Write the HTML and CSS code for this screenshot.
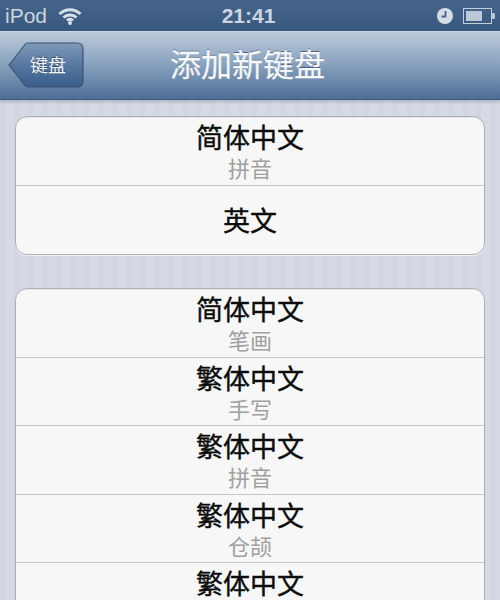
FILE: index.html
```html
<!DOCTYPE html>
<html lang="zh">
<head>
  <meta charset="UTF-8" />
  <title>添加新键盘</title>
  <link rel="stylesheet" href="styles.css">
</head>
<body>
  <div class="screen">
    <div class="status-bar">
      <div class="status-left">
        <span>iPod</span>
        <svg class="wifi" width="24" height="18" viewBox="0 0 24 18">
          <path d="M1.500 7 A15 15 0 0 1 22.500 7" />
          <path d="M5.500 10.500 A9.500 9.500 0 0 1 18.500 10.500" />
          <path d="M9 13.500 A4.500 4.500 0 0 1 15 13.500" />
          <circle cx="12" cy="16" r="2" />
        </svg>
      </div>
      <div class="status-time">21:41</div>
      <div class="status-right">
        <svg class="clock" width="16" height="16" viewBox="0 0 16 16">
          <circle cx="8" cy="8" r="8" />
          <path d="M8.500 3 V8.500 H4.500" />
        </svg>
        <svg class="battery" width="32" height="16" viewBox="0 0 32 16">
          <rect class="battery-shell" x="0.500" y="0.500" width="28" height="15" />
          <rect class="battery-level" x="3" y="3" width="16" height="10" />
          <rect class="battery-cap" x="29" y="5" width="3" height="6" rx="1" />
        </svg>
      </div>
    </div>

    <div class="nav-bar">
      <div class="back-button">
        <svg class="back-shape" width="76" height="46" viewBox="0 0 76 46">
          <defs>
            <linearGradient id="back-fill" x1="0" y1="0" x2="0" y2="1">
              <stop offset="0" stop-color="#7f9aba" />
              <stop offset="0.5" stop-color="#56779f" />
              <stop offset="1" stop-color="#3a5d8d" />
            </linearGradient>
          </defs>
          <path d="M1 23 L17 2.500 Q18 1 20 1 H69 Q75 1 75 7 V39 Q75 45 69 45 H20 Q18 45 17 43.500 Z" fill="url(#back-fill)" stroke="#3c5372" stroke-width="1.200" />
        </svg>
        <span class="back-label">键盘</span>
      </div>
      <div class="nav-title">添加新键盘</div>
    </div>

    <div class="content">
      <div class="group">
        <div class="row">
          <div class="row-title">简体中文</div>
          <div class="row-sub">拼音</div>
        </div>
        <div class="row row-single">
          <div class="row-title">英文</div>
        </div>
      </div>

      <div class="group">
        <div class="row">
          <div class="row-title">简体中文</div>
          <div class="row-sub">笔画</div>
        </div>
        <div class="row">
          <div class="row-title">繁体中文</div>
          <div class="row-sub">手写</div>
        </div>
        <div class="row">
          <div class="row-title">繁体中文</div>
          <div class="row-sub">拼音</div>
        </div>
        <div class="row">
          <div class="row-title">繁体中文</div>
          <div class="row-sub">仓颉</div>
        </div>
        <div class="row">
          <div class="row-title">繁体中文</div>
        </div>
      </div>
    </div>
  </div>
</body>
</html>
```

FILE: styles.css
```css
:root {
  --cjk: "Noto Sans CJK SC", "Liberation Sans", sans-serif;
  --divider: #c6c7c9;
}

html, body {
  margin: 0;
  height: 100%;
  overflow: hidden;
}

.screen {
  width: 500px;
  height: 600px;
  overflow: hidden;
  display: flex;
  flex-direction: column;
  background-color: #d3d8e3;
  background-image: repeating-linear-gradient(to right, #d1d6e2 0, #d1d6e2 6px, #d6dae5 6px, #d6dae5 14px);
}

/* Status bar */
.status-bar {
  flex: none;
  height: 31px;
  box-sizing: border-box;
  padding: 0 5px 0 5px;
  display: grid;
  grid-template-columns: 1fr auto 1fr;
  align-items: center;
  color: #ccd5e0;
  font-family: "Liberation Sans", sans-serif;
  font-size: 21px;
  background: linear-gradient(to bottom, #47658b, #37587f);
}

.status-left {
  display: flex;
  align-items: center;
  gap: 11px;
}

.status-time {
  margin-left: -3px;
  font-weight: bold;
}

.status-right {
  display: flex;
  justify-content: flex-end;
  align-items: center;
  gap: 10px;
}

.wifi path {
  fill: none;
  stroke: #d8e0e9;
  stroke-width: 3;
}

.wifi circle {
  fill: #d8e0e9;
}

.clock circle {
  fill: #d6dde6;
}

.clock path {
  fill: none;
  stroke: #41618a;
  stroke-width: 1.800;
}

.battery-shell {
  fill: none;
  stroke: #c3cedb;
}

.battery-level,
.battery-cap {
  fill: #bcc8d6;
}

/* Nav bar */
.nav-bar {
  flex: none;
  height: 69px;
  box-sizing: border-box;
  padding: 10px 0 0 8px;
  display: flex;
  position: relative;
  border-top: 1px solid #cbd6e2;
  border-bottom: 1px solid #42597a;
  background: linear-gradient(to bottom, #bccadb, #86a0bd 50%, #4e6e97);
  box-shadow: 0 2px 3px rgba(60, 70, 90, 0.25);
}

.back-button {
  position: relative;
  width: 76px;
  height: 46px;
}

.back-shape {
  display: block;
}

.back-label {
  position: absolute;
  top: 0;
  left: 22px;
  width: 36px;
  height: 46px;
  line-height: 44px;
  font-family: var(--cjk);
  font-size: 18px;
  color: #f2f4f7;
  text-shadow: 0 -1px 0 rgba(30, 50, 80, 0.6);
}

.nav-title {
  margin-left: 86px;
  margin-top: -8px;
  line-height: 58px;
  font-family: var(--cjk);
  font-size: 31px;
  -webkit-text-stroke: 0.3px #f5f7fa;
  color: #f5f7fa;
  text-shadow: 0 -1px 0 rgba(50, 70, 100, 0.7);
}

/* Grouped list */
.content {
  padding: 16px 15px 0;
  display: flex;
  flex-direction: column;
  gap: 33px;
}

.group {
  flex: none;
  background: #f7f7f7;
  border: 1px solid #aeb0b5;
  border-radius: 12px;
  box-shadow: 0 1px 0 #eef0f5, inset 0 1px 0 #e6e6e8;
}

.row {
  height: 68.5px;
  box-sizing: border-box;
  padding-top: 1px;
  display: flex;
  flex-direction: column;
  align-items: center;
  border-bottom: 1px solid var(--divider);
  font-family: var(--cjk);
}

.row:last-child {
  border-bottom: none;
}

.row-single {
  padding-top: 0;
  justify-content: center;
}

.row-title {
  font-size: 27px;
  -webkit-text-stroke: 0.4px #0c0c0c;
  line-height: 37px;
  color: #0c0c0c;
}

.row-sub {
  font-size: 22px;
  line-height: 25px;
  color: #a0a0a0;
}
```
